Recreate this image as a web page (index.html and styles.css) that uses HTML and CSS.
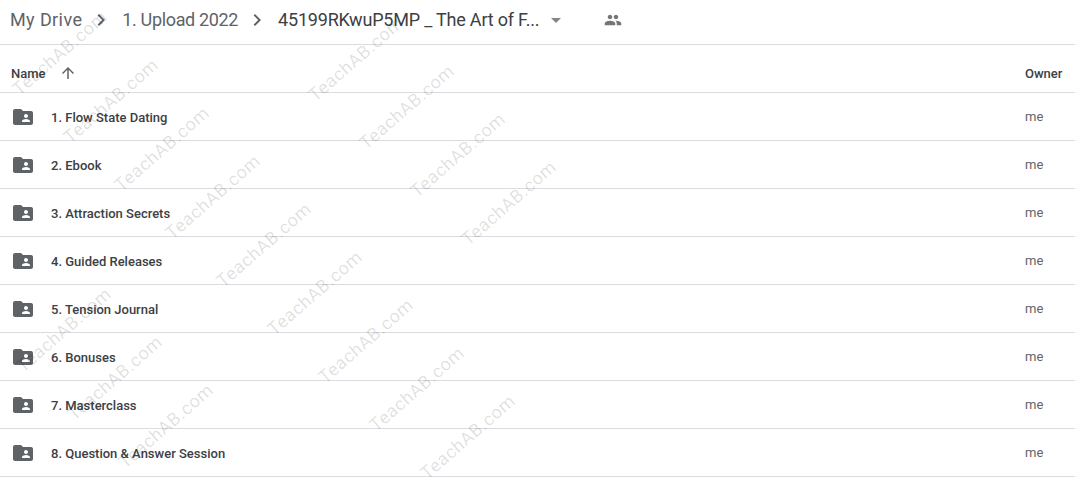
FILE: index.html
```html
<!DOCTYPE html>
<html lang="en">
<head>
    <meta charset="UTF-8">
    <title>My Drive</title>
    <link rel="stylesheet" href="styles.css">
</head>
<body>
    <!-- Breadcrumb -->
    <div class="crumbs">
        <span class="crumb root">My Drive</span>
        <svg class="chevron" viewBox="0 0 24 24"><path d="M10 6L8.59 7.41 13.17 12l-4.58 4.59L10 18l6-6z"/></svg>
        <span class="crumb upload">1. Upload 2022</span>
        <svg class="chevron" viewBox="0 0 24 24"><path d="M10 6L8.59 7.41 13.17 12l-4.58 4.59L10 18l6-6z"/></svg>
        <span class="crumb current">45199RKwuP5MP _ The Art of F...</span>
        <svg class="caret" viewBox="0 0 24 24"><path d="M7 10l5 5 5-5z"/></svg>
        <svg class="people" viewBox="0 0 24 24"><path d="M16 11c1.66 0 2.99-1.34 2.99-3S17.66 5 16 5c-1.66 0-3 1.34-3 3s1.34 3 3 3zm-8 0c1.66 0 2.99-1.34 2.99-3S9.66 5 8 5C6.34 5 5 6.34 5 8s1.34 3 3 3zm0 2c-2.33 0-7 1.17-7 3.5V19h14v-2.5c0-2.33-4.67-3.5-7-3.5zm8 0c-.29 0-.62.02-.97.05 1.16.84 1.97 1.97 1.97 3.45V19h6v-2.5c0-2.33-4.67-3.5-7-3.5z"/></svg>
    </div>

    <!-- File list -->
    <div class="head-row">
        <span class="head-name">Name</span>
        <svg class="sort" viewBox="0 0 24 24"><path d="M4 12l1.41 1.41L11 7.83V20h2V7.83l5.58 5.59L20 12l-8-8-8 8z"/></svg>
        <span class="head-owner">Owner</span>
    </div>
    <div class="row">
        <svg class="folder" viewBox="0 0 24 24"><path d="M20 6h-8l-2-2H4c-1.1 0-1.99.9-1.99 2L2 18c0 1.1.9 2 2 2h16c1.1 0 2-.9 2-2V8c0-1.1-.9-2-2-2zm-5 3c1.1 0 2 .9 2 2s-.9 2-2 2-2-.9-2-2 .9-2 2-2zm4 8h-8v-1c0-1.33 2.67-2 4-2s4 .67 4 2v1z"/></svg>
        <span class="name">1. Flow State Dating</span>
        <span class="owner">me</span>
    </div>
    <div class="row">
        <svg class="folder" viewBox="0 0 24 24"><path d="M20 6h-8l-2-2H4c-1.1 0-1.99.9-1.99 2L2 18c0 1.1.9 2 2 2h16c1.1 0 2-.9 2-2V8c0-1.1-.9-2-2-2zm-5 3c1.1 0 2 .9 2 2s-.9 2-2 2-2-.9-2-2 .9-2 2-2zm4 8h-8v-1c0-1.33 2.67-2 4-2s4 .67 4 2v1z"/></svg>
        <span class="name">2. Ebook</span>
        <span class="owner">me</span>
    </div>
    <div class="row">
        <svg class="folder" viewBox="0 0 24 24"><path d="M20 6h-8l-2-2H4c-1.1 0-1.99.9-1.99 2L2 18c0 1.1.9 2 2 2h16c1.1 0 2-.9 2-2V8c0-1.1-.9-2-2-2zm-5 3c1.1 0 2 .9 2 2s-.9 2-2 2-2-.9-2-2 .9-2 2-2zm4 8h-8v-1c0-1.33 2.67-2 4-2s4 .67 4 2v1z"/></svg>
        <span class="name">3. Attraction Secrets</span>
        <span class="owner">me</span>
    </div>
    <div class="row">
        <svg class="folder" viewBox="0 0 24 24"><path d="M20 6h-8l-2-2H4c-1.1 0-1.99.9-1.99 2L2 18c0 1.1.9 2 2 2h16c1.1 0 2-.9 2-2V8c0-1.1-.9-2-2-2zm-5 3c1.1 0 2 .9 2 2s-.9 2-2 2-2-.9-2-2 .9-2 2-2zm4 8h-8v-1c0-1.33 2.67-2 4-2s4 .67 4 2v1z"/></svg>
        <span class="name">4. Guided Releases</span>
        <span class="owner">me</span>
    </div>
    <div class="row">
        <svg class="folder" viewBox="0 0 24 24"><path d="M20 6h-8l-2-2H4c-1.1 0-1.99.9-1.99 2L2 18c0 1.1.9 2 2 2h16c1.1 0 2-.9 2-2V8c0-1.1-.9-2-2-2zm-5 3c1.1 0 2 .9 2 2s-.9 2-2 2-2-.9-2-2 .9-2 2-2zm4 8h-8v-1c0-1.33 2.67-2 4-2s4 .67 4 2v1z"/></svg>
        <span class="name">5. Tension Journal</span>
        <span class="owner">me</span>
    </div>
    <div class="row">
        <svg class="folder" viewBox="0 0 24 24"><path d="M20 6h-8l-2-2H4c-1.1 0-1.99.9-1.99 2L2 18c0 1.1.9 2 2 2h16c1.1 0 2-.9 2-2V8c0-1.1-.9-2-2-2zm-5 3c1.1 0 2 .9 2 2s-.9 2-2 2-2-.9-2-2 .9-2 2-2zm4 8h-8v-1c0-1.33 2.67-2 4-2s4 .67 4 2v1z"/></svg>
        <span class="name">6. Bonuses</span>
        <span class="owner">me</span>
    </div>
    <div class="row">
        <svg class="folder" viewBox="0 0 24 24"><path d="M20 6h-8l-2-2H4c-1.1 0-1.99.9-1.99 2L2 18c0 1.1.9 2 2 2h16c1.1 0 2-.9 2-2V8c0-1.1-.9-2-2-2zm-5 3c1.1 0 2 .9 2 2s-.9 2-2 2-2-.9-2-2 .9-2 2-2zm4 8h-8v-1c0-1.33 2.67-2 4-2s4 .67 4 2v1z"/></svg>
        <span class="name">7. Masterclass</span>
        <span class="owner">me</span>
    </div>
    <div class="row">
        <svg class="folder" viewBox="0 0 24 24"><path d="M20 6h-8l-2-2H4c-1.1 0-1.99.9-1.99 2L2 18c0 1.1.9 2 2 2h16c1.1 0 2-.9 2-2V8c0-1.1-.9-2-2-2zm-5 3c1.1 0 2 .9 2 2s-.9 2-2 2-2-.9-2-2 .9-2 2-2zm4 8h-8v-1c0-1.33 2.67-2 4-2s4 .67 4 2v1z"/></svg>
        <span class="name">8. Question &amp; Answer Session</span>
        <span class="owner">me</span>
    </div>

    <!-- Watermark -->
    <span class="wm a1">TeachAB.com</span>
    <span class="wm a2">TeachAB.com</span>
    <span class="wm a3">TeachAB.com</span>
    <span class="wm a4">TeachAB.com</span>
    <span class="wm a5">TeachAB.com</span>
    <span class="wm a6">TeachAB.com</span>
    <span class="wm a7">TeachAB.com</span>
    <span class="wm a8">TeachAB.com</span>
    <span class="wm a9">TeachAB.com</span>
    <span class="wm b1">TeachAB.com</span>
    <span class="wm b2">TeachAB.com</span>
    <span class="wm b3">TeachAB.com</span>
    <span class="wm b4">TeachAB.com</span>
    <span class="wm c1">TeachAB.com</span>
    <span class="wm c2">TeachAB.com</span>
    <span class="wm c3">TeachAB.com</span>
</body>
</html>
```
FILE: styles.css
```css
* { box-sizing: border-box; margin: 0; padding: 0; }
html, body { height: 100%; overflow: hidden; }
body { position: relative; background: white; font-family: Roboto, Arial, sans-serif; color: #3c4043; }

/* Breadcrumb */
.crumbs { display: flex; align-items: center; height: 45px; padding: 0 0 5px 10px; border-bottom: 1px solid #dadce0; }
.crumb { font-size: 18px; line-height: 24px; color: #5f6368; white-space: nowrap; }
.root { letter-spacing: 0.4px; }
.upload { letter-spacing: -0.35px; }
.crumb.current { color: #3c4043; letter-spacing: -0.2px; }
.chevron { width: 24px; height: 24px; fill: #5f6368; margin: 0 9px 0 7px; flex: none; }
.caret { width: 24px; height: 24px; fill: #80868b; margin-left: 5px; flex: none; }
.people { width: 18px; height: 18px; fill: #757575; margin-left: 36px; flex: none; }

/* File list */
.head-row { display: flex; align-items: center; height: 48px; padding: 9px 0 0 11px; border-bottom: 1px solid #dadce0; font-size: 13px; font-weight: 500; }
.head-name { width: 48px; }
.sort { width: 18px; height: 18px; fill: #5f6368; }
.head-owner { margin-left: auto; width: 50px; }
.row { display: flex; align-items: center; height: 48px; padding-left: 11px; border-bottom: 1px solid #dadce0; font-size: 13px; }
.folder { width: 24px; height: 24px; fill: #5f6368; flex: none; }
.name { margin: 1px 0 0 16px; font-weight: 500; }
.owner { margin-left: auto; width: 50px; color: #5f6368; }

/* Watermark */
.wm { position: absolute; width: 140px; text-align: center; margin: -10px 0 0 -70px; line-height: 20px; font-size: 18px; letter-spacing: 0.6px; color: rgba(0, 0, 0, 0.13); transform: rotate(-41deg); white-space: nowrap; }
.a1 { left: 60px; top: 53px; }
.a2 { left: 111px; top: 101px; }
.a3 { left: 162px; top: 149px; }
.a4 { left: 213px; top: 197px; }
.a5 { left: 264px; top: 245px; }
.a6 { left: 315px; top: 293px; }
.a7 { left: 366px; top: 341px; }
.a8 { left: 417px; top: 389px; }
.a9 { left: 468px; top: 437px; }
.b1 { left: 356px; top: 59px; }
.b2 { left: 407px; top: 107px; }
.b3 { left: 458px; top: 155px; }
.b4 { left: 509px; top: 203px; }
.c1 { left: 64px; top: 330px; }
.c2 { left: 115px; top: 378px; }
.c3 { left: 166px; top: 426px; }
```
